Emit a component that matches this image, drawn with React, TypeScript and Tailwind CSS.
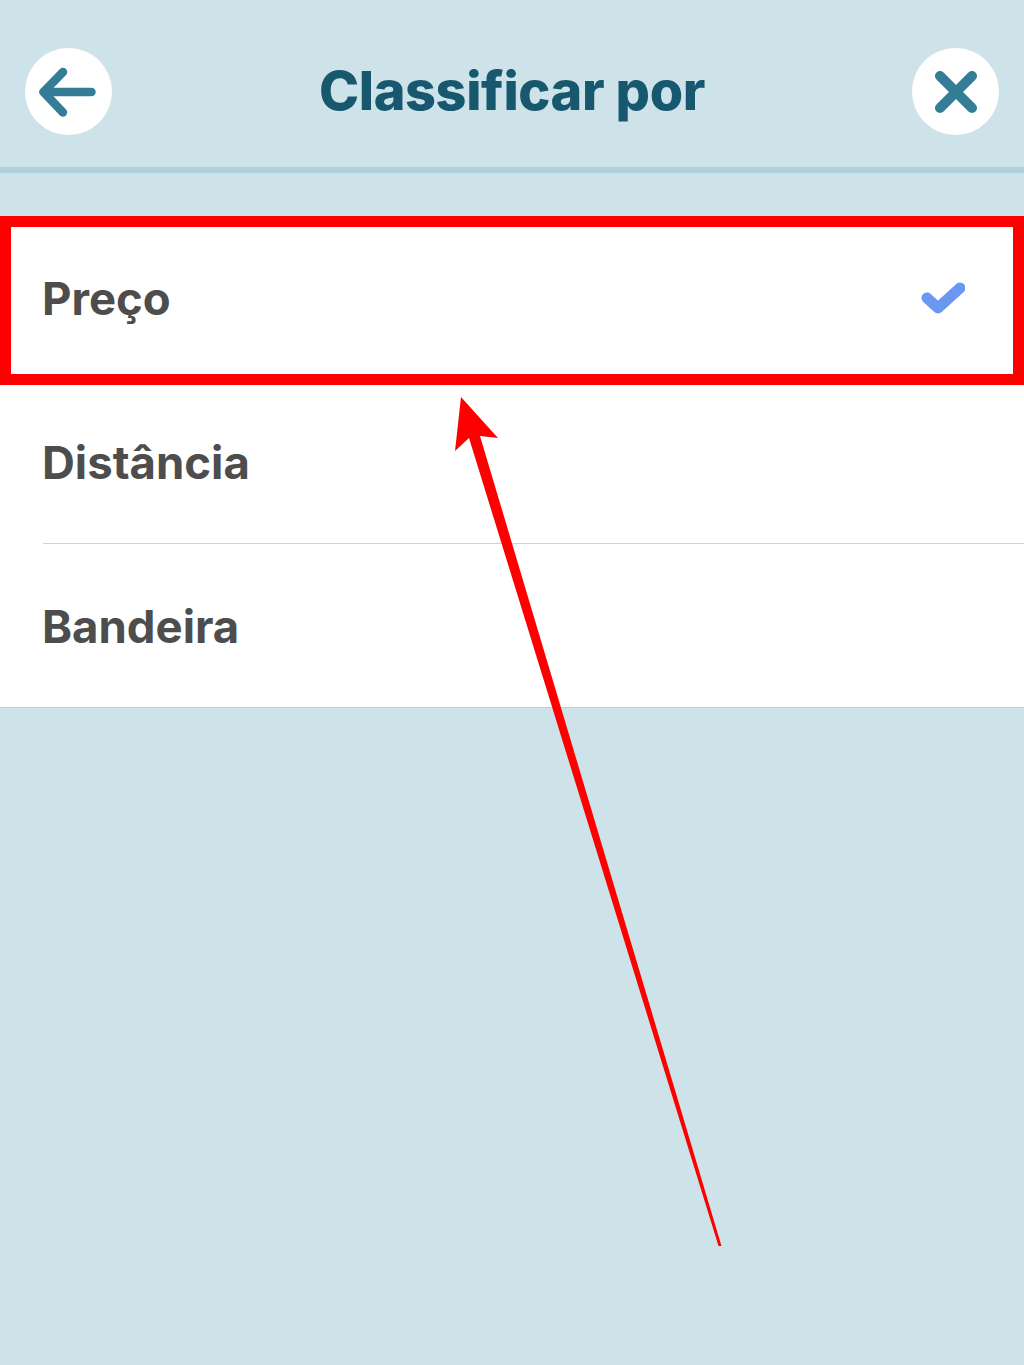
import React from 'react';

const options = ['Preço', 'Distância', 'Bandeira'];

const App: React.FC = () => {
  return (
    <div className="relative flex min-h-[1365px] flex-col overflow-hidden bg-[#cee2ea] font-['Inter',sans-serif]">
      {/* Header */}
      <header className="flex h-[173px] items-center justify-between border-b-[6px] border-[#afd0da] px-[25px] pt-[15px]">
        <button className="flex h-[87px] w-[87px] items-center justify-center rounded-full bg-white">
          <svg viewBox="0 0 87 87" className="h-[87px] w-[87px]" fill="none" stroke="#337d96" strokeWidth="8.5" strokeLinecap="round" strokeLinejoin="round">
            <path d="M18.5 44H66.5M38 24L18.5 44L38 64.5" />
          </svg>
        </button>
        <h1 className="text-[54px] leading-none font-extrabold tracking-[-0.4px] text-[#17586f]">Classificar por</h1>
        <button className="flex h-[87px] w-[87px] items-center justify-center rounded-full bg-white">
          <svg viewBox="0 0 87 87" className="h-[87px] w-[87px]" fill="none" stroke="#337d96" strokeWidth="10" strokeLinecap="round">
            <path d="M28 28L60 60M60 28L28 60" />
          </svg>
        </button>
      </header>

      {/* Options */}
      <ul className="mt-[43px] bg-white">
        {options.map((label, i) => (
          <li key={label} className="relative flex h-[164px] items-center pt-[2px] pl-[42px] text-[#4d4d4d]">
            <span className="text-[45.5px] leading-none font-bold">{label}</span>
            {i === 0 && (
              <svg viewBox="0 0 44 40" className="absolute top-[66px] right-[59px] h-[40px] w-[44px]" fill="none" stroke="#6a97f2" strokeWidth="11" strokeLinecap="round" strokeLinejoin="round">
                <path d="M6 16L17 26L39 6" />
              </svg>
            )}
            {i === 1 && <div className="absolute right-0 bottom-0 left-[43px] h-px bg-[#cfd3d5]" />}
            {i === 2 && <div className="absolute right-0 bottom-0 left-0 h-px bg-[#c6ced2]" />}
          </li>
        ))}
      </ul>

      {/* Annotation: red box */}
      <div className="absolute top-[216px] left-0 h-[169px] w-[1024px] border-[11px] border-[#ff0000]" />

      {/* Annotation: red arrow */}
      <svg viewBox="0 0 1024 1365" className="absolute top-0 left-0 h-[1365px] w-[1024px]">
        <polygon points="461,397 498,438 480,436 721.5,1246 718.5,1246 469,438 455,451" fill="#ff0000" />
      </svg>
    </div>
  );
};

export default App;
